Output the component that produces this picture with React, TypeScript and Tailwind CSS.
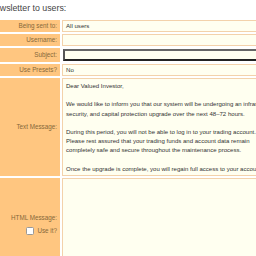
import React from "react";

const labelCls =
  "w-[60px] shrink-0 bg-[#ffc680] text-right pr-[3px] text-[6.3px] text-[#86683a] flex items-center justify-end";

export default function App() {
  const lines = [
    "Dear Valued Investor,",
    "",
    "We would like to inform you that our system will be undergoing an infrastructure,",
    "security, and capital protection upgrade over the next 48–72 hours.",
    "",
    "During this period, you will not be able to log in to your trading account.",
    "Please rest assured that your trading funds and account data remain",
    "completely safe and secure throughout the maintenance process.",
    "",
    "Once the upgrade is complete, you will regain full access to your account.",
  ];
  return (
    <div className="w-[256px] h-[256px] overflow-hidden bg-white font-['Liberation_Sans',Arial,sans-serif]">
      <div className="w-[420px]">
        <div className="h-[20px] -ml-[33px] text-[8.8px] leading-[17px] text-[#444] whitespace-nowrap">
          Send newsletter to users:
        </div>
        <div className="flex flex-col gap-[2px]">
          <div className="flex gap-[2px] h-[12px]">
            <div className={labelCls}>Being sent to:</div>
            <div className="flex-1 border border-[#f3d2ab] bg-[#fffff0] text-[6.1px] text-[#333] pl-[3px] flex items-center">
              All users
            </div>
          </div>
          <div className="flex gap-[2px] h-[12px]">
            <div className={labelCls}>Username:</div>
            <div className="flex-1 border border-[#f3d2ab] bg-[#fffff0]" />
          </div>
          <div className="flex gap-[2px] h-[14px]">
            <div className={labelCls}>Subject:</div>
            <div className="flex-1 flex items-center pl-[1px]">
              <div className="w-full h-[12px] border-2 border-t-[#666] border-l-[#555] border-b-[#222] border-r-[#333] bg-[#fffff0]" />
            </div>
          </div>
          <div className="flex gap-[2px] h-[12px]">
            <div className={labelCls}>Use Presets?</div>
            <div className="flex-1 border border-[#f3d2ab] bg-[#fffff0] text-[6.1px] text-[#333] pl-[3px] flex items-center">
              No
            </div>
          </div>
          <div className="flex gap-[2px] h-[98px]">
            <div className={labelCls}>Text Message:</div>
            <div className="flex-1 border border-[#f3d2ab] bg-[#fffff0] text-[6.05px] leading-[9.2px] text-[#333] pl-[3px] pt-[3px]">
              {lines.map((l, i) => (
                <div key={i} className="h-[9.2px] whitespace-nowrap">
                  {l}
                </div>
              ))}
            </div>
          </div>
          <div className="flex gap-[2px] h-[98px]">
            <div className="w-[60px] shrink-0 bg-[#ffc680] text-right pr-[3px] text-[6.3px] text-[#86683a] flex flex-col items-end justify-center gap-[4px] pb-[6px]">
              <div>HTML Message:</div>
              <div className="flex items-center gap-[3px]">
                <span className="w-[8px] h-[8px] bg-white border border-[#999] rounded-[1.5px]" />
                <span>Use it?</span>
              </div>
            </div>
            <div className="flex-1 border border-[#f3d2ab] bg-[#fffff0]" />
          </div>
        </div>
      </div>
    </div>
  );
}
